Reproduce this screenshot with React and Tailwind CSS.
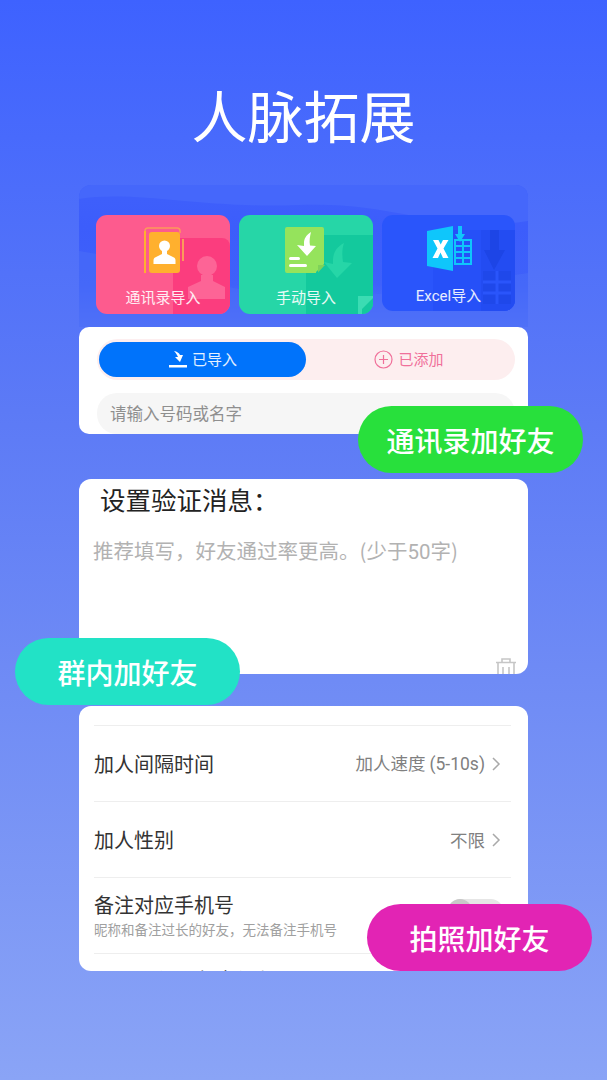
import React from "react";

const FONT = "font-['Noto_Sans_CJK_SC','Noto_Sans',sans-serif]";
const LATIN = "font-['Roboto',sans-serif]";

function Tile({ className, label, labelClass, children, shadow }) {
  return (
    <div className={`relative flex shrink-0 flex-col items-center overflow-hidden rounded-[11px] ${className}`}>
      {shadow}
      <div className="relative flex h-[54px] w-full items-start justify-center">{children}</div>
      <div className={`relative text-[15px] leading-[20px] text-white/90 ${labelClass}`}>{label}</div>
    </div>
  );
}

function ContactIcon() {
  return (
    <svg width="42" height="50" viewBox="0 0 42 50" className="mt-[11px] ml-[2px]">
      <path d="M2 46V5a3 3 0 0 1 3-3h29a3 3 0 0 1 3 3v2" fill="none" stroke="#fb9a5a" strokeWidth="1.5" />
      <rect x="1" y="5" width="2" height="42" fill="#ffb02e" />
      <rect x="39" y="13" width="2" height="22" fill="#fb9a5a" />
      <rect x="6" y="6" width="31" height="41" rx="3" fill="#ffb02e" />
      <circle cx="21.5" cy="20" r="5.5" fill="#fff" />
      <path d="M19 25h5v3l7 3.5c1 .5 1.500 1.500 1.500 3V38h-22v-3.500c0-1.500.5-2.500 1.500-3l7-3.500z" fill="#fff" />
    </svg>
  );
}

function ManualIcon() {
  return (
    <svg width="42" height="48" viewBox="0 0 42 48" className="mt-[11px] ml-[-2px]">
      <path d="M3 1h35a2 2 0 0 1 2 2v35l-8 8v1H3a2 2 0 0 1-2-2V3a2 2 0 0 1 2-2z" fill="#95e35c" />
      <path d="M34 39h7l-7 7.500z" fill="#7ed25a" />
      <path d="M27 6c-5 3-7 7-7 11v3l-7-1 10 11 9-10-6-.5c-1-5 0-9 1-13.500z" fill="#fff" />
      <rect x="5" y="31" width="11" height="3" rx="1.500" fill="#fff" />
      <rect x="5" y="38" width="18" height="3" rx="1.500" fill="#fff" />
    </svg>
  );
}

function ExcelIcon() {
  return (
    <svg width="46" height="46" viewBox="0 0 46 46" className="mt-[11px]">
      <path d="M1 5 27 0v45L1 40z" fill="#0fc6fb" />
      <path d="M7 14h5.500l2.200 4.500L17 14h5.500l-5 8.500 5 9.500H17l-2.500-5.500L12 32H6.500l5-9.500z" fill="#fff" />
      <path d="M32 0h4v8h3l-5 8-5-8h3z" fill="#0fc6fb" />
      <path d="M29 14h16v24H29zm0 6h16m-16 6h16m-16 6h16M37 14v24" fill="none" stroke="#0fc6fb" strokeWidth="2" />
    </svg>
  );
}

function Chevron() {
  return (
    <svg width="9" height="14" viewBox="0 0 9 14" className="ml-[7px]">
      <path d="M1 1l6 6-6 6" fill="none" stroke="#a9a9a9" strokeWidth="1.500" />
    </svg>
  );
}

function SettingRow({ label, children }) {
  return (
    <div className="flex h-[76px] items-center justify-between border-b border-[#eeeeee]">
      <span className="text-[20px] leading-[28px] text-[#333333]">{label}</span>
      <span className="flex items-center pr-[10px] text-[17.500px] leading-[26px] text-[#808080]">
        <span>{children}</span>
        <Chevron />
      </span>
    </div>
  );
}

function Badge({ className, children }) {
  return (
    <div className={`absolute flex h-[67px] w-[225px] items-center justify-center rounded-full text-[28px] font-medium text-white ${className}`}>
      {children}
    </div>
  );
}

export default function App() {
  return (
    <div className={`relative flex h-[1080px] w-[607px] flex-col items-center overflow-hidden bg-[linear-gradient(180deg,#3e62ff_0%,#5c7af6_38%,#6f8bf5_63%,#8aa4f6_100%)] ${FONT}`}>
      <h1 className="mt-[81px] text-[56px] leading-[66px] font-normal text-white">人脉拓展</h1>

      <section className="mt-[38px] h-[249px] w-[449px]">
        <div className="relative h-[142px] overflow-hidden rounded-t-[12px] bg-[linear-gradient(180deg,#3f60fb_0%,#3c5dfb_30%,#3f61fa_70%,#5877f6_100%)]">
          <svg className="absolute inset-0" width="449" height="142" viewBox="0 0 449 142">
            <path d="M0 14C60 5 120 24 220 20S360 50 449 36V0H0z" fill="#4567fb" />
            <path d="M0 66c70 10 120 40 220 44s170-14 229-22v54H0z" fill="#4a6cf9" opacity=".6" />
          </svg>
          <div className="relative flex gap-[9px] pt-[30px] pl-[17px]">
            <Tile
              className="h-[99px] w-[134px] bg-[#fd5b8e]"
              label="通讯录导入"
              labelClass="mt-[18px]"
              shadow={
                <div className="absolute top-[23px] left-[77px] h-[76px] w-[57px] rounded-tr-[8px] bg-[#fb3d7e]">
                  <svg width="57" height="76" viewBox="0 0 57 76">
                    <circle cx="34" cy="28" r="10" fill="#fd6496" />
                    <path d="M28 37h12v6l12 6v12H15V49l13-6z" fill="#fd6496" />
                  </svg>
                </div>
              }
            >
              <ContactIcon />
            </Tile>
            <Tile
              className="h-[99px] w-[134px] bg-[#26d6a7]"
              label="手动导入"
              labelClass="mt-[18px]"
              shadow={
                <div className="absolute top-[20px] left-[67px] h-[79px] w-[67px] bg-[#13c99d]">
                  <svg width="67" height="79" viewBox="0 0 67 79">
                    <path d="M38 8c-8 4-11 11-11 17v4l-9-2 13 16 15-15-9-1c-1-7-1-13 1-19z" fill="#26d6a7" />
                    <path d="M52 79V61h15v2l-11 11v5z" fill="#3bdcb3" />
                  </svg>
                </div>
              }
            >
              <ManualIcon />
            </Tile>
            <Tile
              className="h-[96px] w-[133px] bg-[#2a55fb]"
              label={<><span className={LATIN}>Excel</span>导入</>}
              labelClass="mt-[16px]"
              shadow={
                <div className="absolute top-[15px] left-[51px] h-[81px] w-[82px] bg-[#2650f8]">
                  <svg width="82" height="81" viewBox="0 0 82 81">
                    <rect x="48" y="0" width="34" height="81" fill="#234cf2" />
                    <path d="M57 0h9v20h6L61 40 51 20h6z" fill="#1d45e6" />
                    <path d="M50 41h28v33H50z" fill="#1f48ea" />
                    <path d="M50 52h28M50 63h28M64 41v33" fill="none" stroke="#2a55fb" strokeWidth="3" />
                  </svg>
                </div>
              }
            >
              <ExcelIcon />
            </Tile>
          </div>
        </div>
        <div className="h-[107px] rounded-[10px] bg-white px-[18px] pt-[12px]">
          <div className="flex h-[41px] w-[418px] items-center rounded-full bg-[#fdeeef] pl-[2px]">
            <div className="flex h-[35px] w-[207px] items-center justify-center rounded-full bg-[#0073fb] text-[15px] text-white/90">
              <svg width="20" height="18" viewBox="0 0 20 18" className="mr-[4px]">
                <path d="M6 0c3 .5 5 2 6 4h3l-3 7-5-5h3c-1-2-2-4-4-6z" fill="#fff" />
                <rect x="1" y="14" width="18" height="2.500" fill="#fff" />
              </svg>
              已导入
            </div>
            <div className="flex flex-1 items-center justify-center pr-[3px] text-[15px] text-[#f0709a]">
              <svg width="19" height="19" viewBox="0 0 19 19" className="mr-[5px]">
                <circle cx="9.500" cy="9.500" r="8.500" fill="none" stroke="#f0709a" strokeWidth="1.200" />
                <path d="M9.500 5v9M5 9.500h9" stroke="#f0709a" strokeWidth="1.200" />
              </svg>
              已添加
            </div>
          </div>
          <div className="mt-[13px] flex h-[41px] w-[418px] items-center rounded-[20px] bg-[#f6f6f6] pl-[13px] text-[16.500px] text-[#8f8f8f]">
            请输入号码或名字
          </div>
        </div>
      </section>

      <section className="relative mt-[45px] h-[195px] w-[449px] overflow-hidden rounded-[12px] bg-white">
        <div className="pl-[21px] text-[25.500px] leading-[40px] text-[#222222]">{"设置验证消息\uFF1A"}</div>
        <div className="mt-[9px] pl-[14px] text-[20.500px] leading-[44px] text-[#b2b2b2]">
          {"推荐填写\uFF0C好友通过率更高。("}少于<span className={LATIN}>50</span>字)
        </div>
        <svg className="absolute top-[179px] left-[417px]" width="20" height="22" viewBox="0 0 20 22">
          <path d="M0 4.500h20M6 4V1h8v3M2 5v17M18 5v17M7 9v13M13 9v13" fill="none" stroke="#c6c6c6" strokeWidth="1.600" />
        </svg>
      </section>

      <section className="mt-[32px] h-[265px] w-[449px] overflow-hidden rounded-[12px] bg-white pr-[17px] pl-[15px]">
        <div className="h-[20px] border-b border-[#eeeeee]" />
        <SettingRow label="加人间隔时间">
          加人速度 <span className={LATIN}>(5-10s)</span>
        </SettingRow>
        <SettingRow label="加人性别">不限</SettingRow>
        <div className="flex h-[76px] items-start justify-between border-b border-[#eeeeee] pt-[13px]">
          <div>
            <div className="text-[20px] leading-[28px] text-[#333333]">备注对应手机号</div>
            <div className="text-[13.500px] leading-[20px] text-[#a0a0a0]">{"昵称和备注过长的好友\uFF0C无法备注手机号"}</div>
          </div>
          <div className="mt-[8px] mr-[8px] h-[24px] w-[55px] rounded-full bg-[#e6e6e6]">
            <div className="h-[24px] w-[24px] rounded-full bg-[#c8c8c8]" />
          </div>
        </div>
        <div className="pt-[12px] pl-[44px] text-[20px] leading-[28px] text-[#333333]">通讯录好友添加</div>
      </section>

      <Badge className="top-[406px] left-[358px] bg-[#28e03c]">通讯录加好友</Badge>
      <Badge className="top-[638px] left-[15px] bg-[#22e2c6]">群内加好友</Badge>
      <Badge className="top-[904px] left-[367px] bg-[#e224b4]">拍照加好友</Badge>
    </div>
  );
}
